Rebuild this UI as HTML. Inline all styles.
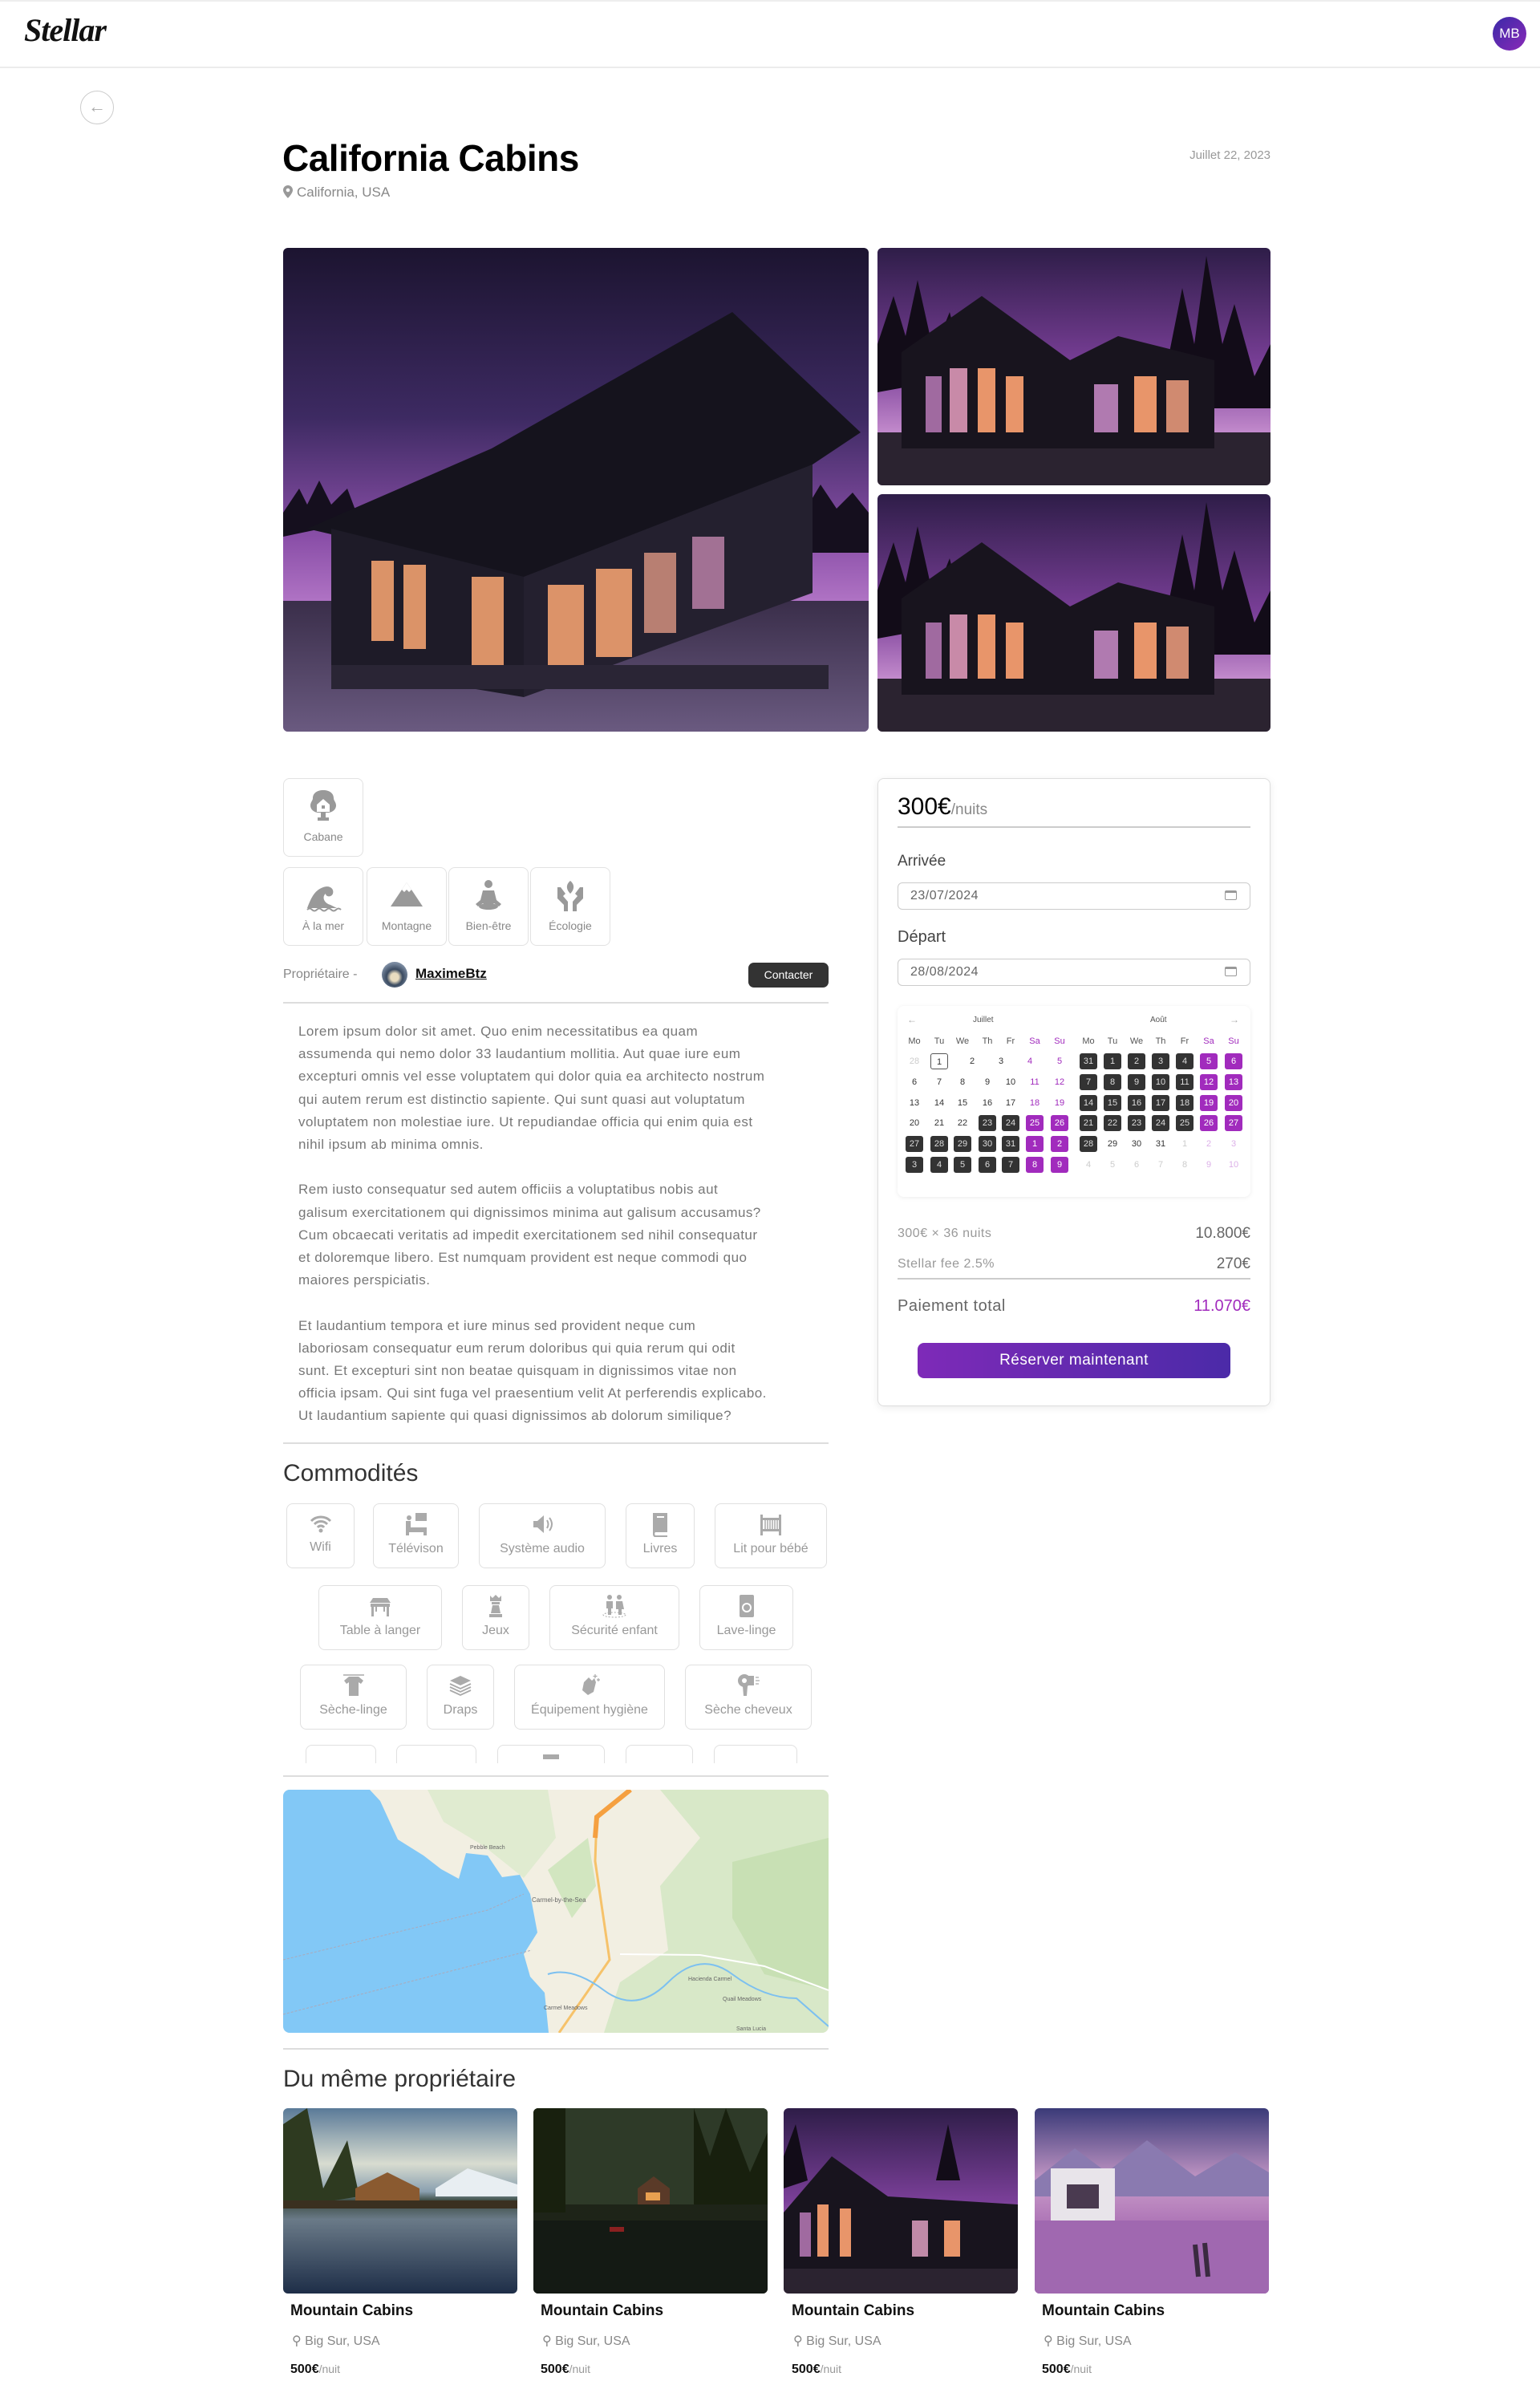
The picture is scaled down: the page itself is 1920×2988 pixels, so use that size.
<!DOCTYPE html>
<html><head><meta charset="utf-8">
<style>
*{box-sizing:border-box;margin:0;padding:0}
body{width:1920px;height:2988px;position:relative;background:#fff;font-family:"Liberation Sans",sans-serif;color:#222;overflow:hidden}
.a{position:absolute}
.hdr{left:0;top:0;width:1920px;height:85px;border-bottom:2px solid #ececec;border-top:2px solid #eee}
.logo{left:30px;top:14px;font-family:"Liberation Serif",serif;font-style:italic;font-weight:bold;font-size:40px;color:#111;letter-spacing:-1px}
.av{left:1861px;top:21px;width:42px;height:42px;border-radius:50%;background:linear-gradient(135deg,#3a2aa8,#8a2ab8);color:#fff;font-size:17px;line-height:42px;text-align:center}
.back{left:100px;top:113px;width:42px;height:42px;border-radius:50%;border:1.5px solid #ccc;color:#aaa;text-align:center;line-height:38px;font-size:22px}
.title{left:352px;top:170px;font-size:46px;font-weight:bold;color:#000;letter-spacing:-0.5px}
.loc{left:353px;top:230px;font-size:17px;color:#888}
.date{left:1380px;width:204px;text-align:right;top:185px;font-size:15px;color:#999}
.img{overflow:hidden;border-radius:6px}
.tile{width:100px;height:98px;border:1.5px solid #e2e2e2;border-radius:8px;text-align:center;font-size:14px;color:#888}
.tile svg{display:block;margin:12px auto 8px}
.btn{left:933px;top:1200px;width:100px;height:31px;background:#333;color:#fff;border-radius:7px;font-size:14px;text-align:center;line-height:31px}
.hr{height:2px;background:#ddd}
.desc{left:372px;top:1272px;width:680px;font-size:17px;line-height:28.2px;color:#777;white-space:nowrap;letter-spacing:0.45px}
.desc p{margin-bottom:28.2px}
h2{font-weight:normal;font-size:30px;color:#333}
.am{height:81px;border:1.5px solid #e0e0e0;border-radius:8px;text-align:center;font-size:16px;color:#999;overflow:hidden}
.am svg{display:block;margin:9px auto 6px}
.card{left:1094px;top:970px;width:490px;height:783px;border:1.5px solid #ddd;border-radius:8px;box-shadow:0 2px 10px rgba(0,0,0,.08)}
.inp{left:1119px;width:440px;height:34px;border:1.5px solid #ccc;border-radius:6px;font-size:16px;color:#666;padding-left:15px;line-height:31px;letter-spacing:0.5px}
.inp span{position:absolute;right:16px;top:9px;width:15px;height:12px;border:1.5px solid #999;border-top-width:3px;border-radius:2px}
.cal{left:1119px;top:1254px;width:440px;height:238px;border-radius:8px;box-shadow:0 1px 6px rgba(0,0,0,.08)}
.r{position:absolute;left:0;height:0;width:1920px}
.r i{position:absolute;font-style:normal;width:22px;height:20px;margin-left:-11px;margin-top:-10px;line-height:20px;text-align:center;font-size:11px;color:#333;border-radius:3px}
i.d{background:#333;color:#ddd}
i.p{background:#a12bbd;color:#fff}
i.t{color:#a12bbd}
i.f{color:#ccc}
i.q{color:#dcb0e8}
i.o{border:1px solid #555}
i.h{color:#555}
.mc{width:292px;height:231px;border-radius:6px;overflow:hidden;top:2628px}
.mt{font-size:19px;font-weight:bold;color:#111;top:2870px}
.ml{font-size:16px;color:#888;top:2908px}
.mp{font-size:16px;color:#111;font-weight:bold;top:2945px}
.mp span{font-weight:normal;color:#999;font-size:14px}
</style></head><body>

<div class="a hdr"></div>
<div class="a logo">Stellar</div>
<div class="a av">MB</div>
<div class="a back">&larr;</div>

<div class="a title">California Cabins</div>
<div class="a loc"><svg width="12" height="16" viewBox="0 0 12 16" style="vertical-align:-2px;margin-right:5px"><path d="M6 0C2.7 0 0 2.6 0 6c0 4 6 10 6 10s6-6 6-10C12 2.6 9.3 0 6 0zm0 8.3A2.3 2.3 0 1 1 6 3.7a2.3 2.3 0 0 1 0 4.6z" fill="#999"/></svg>California, USA</div>
<div class="a date">Juillet 22, 2023</div>

<div class="a img" style="left:353px;top:309px;width:730px;height:603px">
<svg width="730" height="603" viewBox="0 0 730 603">
<defs><linearGradient id="sk" x1="0" y1="0" x2="0" y2="1"><stop offset="0" stop-color="#1c1430"/><stop offset=".35" stop-color="#3d2a62"/><stop offset=".6" stop-color="#8a4fa8"/><stop offset=".75" stop-color="#b578c8"/></linearGradient>
<linearGradient id="gr" x1="0" y1="0" x2="0" y2="1"><stop offset="0" stop-color="#3a2e4a"/><stop offset="1" stop-color="#6a5a80"/></linearGradient></defs>
<rect width="730" height="603" fill="url(#sk)"/>
<path d="M0 330 L20 300 L30 320 L45 290 L60 320 L80 300 L95 340 L0 360Z M620 330 L640 300 L655 320 L670 295 L690 325 L710 305 L730 330 L730 380 L620 380Z" fill="#150f1e"/>
<rect y="440" width="730" height="163" fill="url(#gr)"/>
<path d="M30 350 L260 250 L560 80 L720 230 L660 270 L330 420 Z" fill="#15131d"/>
<path d="M60 350 L300 410 L300 560 L60 520Z" fill="#1e1b28"/>
<path d="M300 410 L660 270 L660 430 L300 560Z" fill="#24202f"/>
<g fill="#f0a070" opacity=".9"><rect x="110" y="390" width="28" height="100"/><rect x="150" y="395" width="28" height="105"/><rect x="235" y="410" width="40" height="110"/><rect x="330" y="420" width="45" height="110"/><rect x="390" y="400" width="45" height="110"/><rect x="450" y="380" width="40" height="100" fill="#c98a7a"/><rect x="510" y="360" width="40" height="90" fill="#b07aa0"/></g>
<rect x="60" y="520" width="620" height="30" fill="#2a2535"/>
</svg></div>

<div class="a img" style="left:1094px;top:309px;width:490px;height:296px">
<svg width="490" height="296" viewBox="0 0 490 296">
<defs><linearGradient id="s2" x1="0" y1="0" x2="0" y2="1"><stop offset="0" stop-color="#2e1d48"/><stop offset=".5" stop-color="#7a3f98"/><stop offset=".8" stop-color="#c890d0"/></linearGradient></defs>
<rect width="490" height="296" fill="url(#s2)"/>
<path d="M0 120 L20 60 L35 110 L50 40 L70 130 L90 80 L110 160 L0 180Z M360 150 L380 50 L395 120 L410 10 L430 120 L445 70 L470 160 L490 120 L490 200 L360 200Z" fill="#120c18"/>
<rect y="230" width="490" height="66" fill="#2b2330"/>
<path d="M30 130 L130 60 L240 140 L300 110 L420 140 L420 250 L30 250Z" fill="#18141e"/>
<g fill="#e8956a"><rect x="60" y="160" width="20" height="70" fill="#a06aa0"/><rect x="90" y="150" width="22" height="80" fill="#c88aa8"/><rect x="125" y="150" width="22" height="80"/><rect x="160" y="160" width="22" height="70"/><rect x="270" y="170" width="30" height="60" fill="#b07ab0"/><rect x="320" y="160" width="28" height="70"/><rect x="360" y="165" width="28" height="65" fill="#d08a70"/></g>
</svg></div>
<div class="a img" style="left:1094px;top:616px;width:490px;height:296px">
<svg width="490" height="296" viewBox="0 0 490 296">
<rect width="490" height="296" fill="url(#s2)"/>
<path d="M0 120 L20 60 L35 110 L50 40 L70 130 L90 80 L110 160 L0 180Z M360 150 L380 50 L395 120 L410 10 L430 120 L445 70 L470 160 L490 120 L490 200 L360 200Z" fill="#120c18"/>
<rect y="230" width="490" height="66" fill="#2b2330"/>
<path d="M30 130 L130 60 L240 140 L300 110 L420 140 L420 250 L30 250Z" fill="#18141e"/>
<g fill="#e8956a"><rect x="60" y="160" width="20" height="70" fill="#a06aa0"/><rect x="90" y="150" width="22" height="80" fill="#c88aa8"/><rect x="125" y="150" width="22" height="80"/><rect x="160" y="160" width="22" height="70"/><rect x="270" y="170" width="30" height="60" fill="#b07ab0"/><rect x="320" y="160" width="28" height="70"/><rect x="360" y="165" width="28" height="65" fill="#d08a70"/></g>
</svg></div>

<div class="a tile" style="left:353px;top:970px"><svg width="44" height="44" viewBox="0 0 44 44"><path d="M22 2c-8 0-13 4-13 10 0 3-3 5-3 9 0 6 6 9 10 9h3v6h-4v4h14v-4h-4v-6h3c4 0 10-3 10-9 0-4-3-6-3-9 0-6-5-10-13-10z" fill="#999"/><path d="M14 20l8-7 8 7v9H14z" fill="#fff"/><rect x="20" y="21" width="4" height="4" fill="#999"/></svg>Cabane</div>
<div class="a tile" style="left:353px;top:1081px"><svg width="48" height="44" viewBox="0 0 48 44"><path d="M4 38c4-10 8-22 20-26 8-3 14 2 12 8-2 5-9 4-9 0-5 4-2 12 6 14l8 4z" fill="#999"/><path d="M4 40q3-3 6 0t6 0 6 0 6 0 6 0 6 0 6 0" stroke="#999" stroke-width="2" fill="none"/></svg>À la mer</div>
<div class="a tile" style="left:457px;top:1081px"><svg width="48" height="44" viewBox="0 0 48 44"><path d="M4 36L24 6l20 30z" fill="#999"/><path d="M18 15l6-9 6 9-3 3-3-3-3 3z" fill="#fff"/></svg>Montagne</div>
<div class="a tile" style="left:559px;top:1081px"><svg width="44" height="44" viewBox="0 0 44 44"><circle cx="22" cy="8" r="5" fill="#999"/><path d="M15 16h14l3 12 6 5-3 3-6-4-7 3-7-3-6 4-3-3 6-5z" fill="#999"/><ellipse cx="22" cy="36" rx="12" ry="4" fill="#999"/></svg>Bien-être</div>
<div class="a tile" style="left:661px;top:1081px"><svg width="44" height="44" viewBox="0 0 44 44"><path d="M6 12v14l8 8v8h5V30l-6-7 3-3-6-8z M38 12v14l-8 8v8h-5V30l6-7-3-3 6-8z" fill="#999"/><path d="M22 4c5 4 6 10 0 16-6-6-5-12 0-16z" fill="#999"/></svg>Écologie</div>

<div class="a" style="left:353px;top:1206px;font-size:16px;color:#888">Propriétaire -</div>
<div class="a" style="left:476px;top:1199px;width:32px;height:32px;border-radius:50%;background:radial-gradient(circle at 50% 60%,#e8dcc0 0 20%,#3a4a60 40%,#7a8aa0 70%)"></div>
<div class="a" style="left:518px;top:1204px;font-size:17px;color:#111;text-decoration:underline;font-weight:bold">MaximeBtz</div>
<div class="a btn">Contacter</div>
<div class="a hr" style="left:353px;top:1249px;width:680px"></div>

<div class="a desc">
<p>Lorem ipsum dolor sit amet. Quo enim necessitatibus ea quam<br>assumenda qui nemo dolor 33 laudantium mollitia. Aut quae iure eum<br>excepturi omnis vel esse voluptatem qui dolor quia ea architecto nostrum<br>qui autem rerum est distinctio sapiente. Qui sunt quasi aut voluptatum<br>voluptatem non molestiae iure. Ut repudiandae officia qui enim quia est<br>nihil ipsum ab minima omnis.</p>
<p>Rem iusto consequatur sed autem officiis a voluptatibus nobis aut<br>galisum exercitationem qui dignissimos minima aut galisum accusamus?<br>Cum obcaecati veritatis ad impedit exercitationem sed nihil consequatur<br>et doloremque libero. Est numquam provident est neque commodi quo<br>maiores perspiciatis.</p>
<p>Et laudantium tempora et iure minus sed provident neque cum<br>laboriosam consequatur eum rerum doloribus qui quia rerum qui odit<br>sunt. Et excepturi sint non beatae quisquam in dignissimos vitae non<br>officia ipsam. Qui sint fuga vel praesentium velit At perferendis explicabo.<br>Ut laudantium sapiente qui quasi dignissimos ab dolorum similique?</p>
</div>
<div class="a hr" style="left:353px;top:1798px;width:680px"></div>

<h2 class="a" style="left:353px;top:1820px">Commodités</h2>

<div class="a" style="left:340px;top:1872px;width:700px;height:326px;overflow:hidden">
<div class="a am" style="left:17px;top:2px;width:85px"><svg width="30" height="30" viewBox="0 0 30 30"><path d="M3 12a17 17 0 0 1 24 0M7 16a11 11 0 0 1 16 0M11 20a5 5 0 0 1 8 0" stroke="#aaa" stroke-width="3" fill="none"/><circle cx="15" cy="24" r="2.5" fill="#aaa"/></svg>Wifi</div>
<div class="a am" style="left:125px;top:2px;width:107px"><svg width="34" height="32" viewBox="0 0 34 32"><rect x="16" y="2" width="14" height="10" fill="#aaa"/><circle cx="8" cy="8" r="3" fill="#aaa"/><path d="M4 12h6v8h20v10h-4v-4H8v4H4z" fill="#aaa"/></svg>Télévison</div>
<div class="a am" style="left:257px;top:2px;width:158px"><svg width="34" height="32" viewBox="0 0 34 32"><path d="M6 12h5l8-7v22l-8-7H6z" fill="#aaa"/><path d="M23 11q3 5 0 10M26 8q6 8 0 16" stroke="#aaa" stroke-width="2" fill="none"/></svg>Système audio</div>
<div class="a am" style="left:440px;top:2px;width:86px"><svg width="30" height="32" viewBox="0 0 30 32"><path d="M6 2h18v24H9a3 3 0 0 0 0 4h15v2H8a4 4 0 0 1-2-3z" fill="#aaa"/><rect x="11" y="6" width="9" height="2" fill="#fff"/></svg>Livres</div>
<div class="a am" style="left:551px;top:2px;width:140px"><svg width="34" height="32" viewBox="0 0 34 32"><path d="M4 4h3v26H4zM27 4h3v26h-3zM7 8h20v3H7zM7 22h20v3H7z" fill="#aaa"/><path d="M10 11v11M13 11v11M16 11v11M19 11v11M22 11v11M25 11v11" stroke="#aaa" stroke-width="1.5"/></svg>Lit pour bébé</div>
<div class="a am" style="left:57px;top:104px;width:154px"><svg width="34" height="32" viewBox="0 0 34 32"><path d="M4 12l4-6h18l4 6z" fill="#aaa"/><path d="M5 13h24v4H5zM6 17h3v12H6zM25 17h3v12h-3zM11 17h2v6h-2zM21 17h2v6h-2z" fill="#aaa"/></svg>Table à langer</div>
<div class="a am" style="left:236px;top:104px;width:84px"><svg width="30" height="32" viewBox="0 0 30 32"><path d="M8 3l3 3 4-4 4 4 3-3v7H8zM10 11h10v3H10zM11 15h8l2 10H9zM7 26h16v4H7z" fill="#aaa"/></svg>Jeux</div>
<div class="a am" style="left:345px;top:104px;width:162px"><svg width="34" height="32" viewBox="0 0 34 32"><circle cx="11" cy="5" r="3" fill="#aaa"/><circle cx="23" cy="5" r="3" fill="#aaa"/><path d="M7 10h8v9h-2v8h-4v-8H7zM19 10h8l2 10h-3v7h-4v-7h-3z" fill="#aaa"/><ellipse cx="17" cy="27" rx="14" ry="3" stroke="#aaa" stroke-dasharray="2 2" fill="none"/></svg>Sécurité enfant</div>
<div class="a am" style="left:532px;top:104px;width:117px"><svg width="30" height="32" viewBox="0 0 30 32"><rect x="6" y="2" width="18" height="28" rx="2" fill="#aaa"/><circle cx="15" cy="18" r="6" fill="#fff"/><circle cx="15" cy="18" r="4" fill="#aaa"/></svg>Lave-linge</div>
<div class="a am" style="left:34px;top:203px;width:133px"><svg width="34" height="32" viewBox="0 0 34 32"><path d="M4 3h26" stroke="#aaa" stroke-width="1.5"/><path d="M11 5h12l6 5-3 4-3-2v17H11V12l-3 2-3-4z" fill="#aaa"/></svg>Sèche-linge</div>
<div class="a am" style="left:192px;top:203px;width:84px"><svg width="34" height="32" viewBox="0 0 34 32"><path d="M17 4l13 6-13 6-13-6z" fill="#aaa"/><path d="M4 14l13 6 13-6M4 18l13 6 13-6M4 22l13 6 13-6" stroke="#aaa" stroke-width="1.8" fill="none"/></svg>Draps</div>
<div class="a am" style="left:301px;top:203px;width:188px"><svg width="34" height="32" viewBox="0 0 34 32"><path d="M10 12l6-6 4 4 3-3 2 5-3 12-7 4-7-6z" fill="#aaa"/><path d="M24 2v5M21.5 4.5h5M28 7v4M26 9h4" stroke="#aaa" stroke-width="1.2"/></svg>Équipement hygiène</div>
<div class="a am" style="left:514px;top:203px;width:158px"><svg width="34" height="32" viewBox="0 0 34 32"><circle cx="12" cy="10" r="8" fill="#aaa"/><circle cx="12" cy="10" r="3" fill="#fff"/><path d="M16 4h8v12h-8zM10 17h6l-1 12h-4z" fill="#aaa"/><path d="M26 6h4M26 10h5M26 14h4" stroke="#aaa" stroke-width="1.3"/></svg>Sèche cheveux</div>
<div class="a am" style="left:41px;top:303px;width:88px"></div>
<div class="a am" style="left:154px;top:303px;width:100px"></div>
<div class="a am" style="left:280px;top:303px;width:134px"><div style="width:20px;height:6px;background:#aaa;margin:11px auto 0"></div></div>
<div class="a am" style="left:440px;top:303px;width:84px"></div>
<div class="a am" style="left:550px;top:303px;width:104px"></div>
</div>
<div class="a hr" style="left:353px;top:2213px;width:680px"></div>

<div class="a img" style="left:353px;top:2231px;width:680px;height:303px;border-radius:8px">
<svg width="680" height="303" viewBox="0 0 680 303">
<rect width="680" height="303" fill="#f2efe2"/>
<path d="M470 0 L680 0 L680 303 L400 303 L420 240 L480 200 L470 120 L520 60Z" fill="#d8e8c8"/>
<path d="M560 90 L680 60 L680 250 L600 230 L560 160Z" fill="#c8e0b4"/>
<path d="M180 0 L330 0 L340 60 L300 110 L250 70 L200 40Z" fill="#e0ebd0"/>
<path d="M330 100 L380 60 L390 120 L360 160Z" fill="#d2e6c0"/>
<path d="M0 0 L108 0 L121 14 L143 62 L175 82 L197 99 L219 111 L228 79 L255 82 L273 109 L295 106 L308 130 L317 178 L300 205 L308 233 L326 253 L331 303 L0 303Z" fill="#82c8f6"/>
<path d="M0 212 L255 150 L300 130 M0 280 L310 200" stroke="#aab" stroke-width="1" stroke-dasharray="3 2" fill="none"/>
<path d="M433 0 L391 34 L389 89 L407 212 L344 303" stroke="#f6c26a" stroke-width="3" fill="none"/>
<path d="M433 0 L391 34 L389 60" stroke="#f5a040" stroke-width="6" fill="none"/>
<path d="M330 230 Q360 220 400 250 T480 240 T560 230 T640 260 L680 295" stroke="#7cc0f0" stroke-width="2" fill="none"/>
<path d="M420 205 L520 206 L600 220 L680 250" stroke="#fff" stroke-width="2" fill="none"/>
<g font-size="7" fill="#666" font-family="Liberation Sans"><text x="233" y="74">Pebble Beach</text><text x="310" y="140" font-size="8">Carmel-by-the-Sea</text><text x="325" y="274">Carmel Meadows</text><text x="505" y="238">Hacienda Carmel</text><text x="548" y="263">Quail Meadows</text><text x="565" y="300">Santa Lucia</text></g>
</svg></div>
<div class="a hr" style="left:353px;top:2553px;width:680px"></div>

<h2 class="a" style="left:353px;top:2575px">Du même propriétaire</h2>

<div class="a mc" style="left:353px"><svg width="292" height="231" viewBox="0 0 292 231"><defs><linearGradient id="c1" x1="0" y1="0" x2="0" y2="1"><stop offset="0" stop-color="#5a7a98"/><stop offset=".3" stop-color="#d8dcd0"/><stop offset=".45" stop-color="#8aa0b0"/><stop offset=".5" stop-color="#3a4a40"/><stop offset=".6" stop-color="#6a7a88"/><stop offset="1" stop-color="#1e2e48"/></linearGradient></defs><rect width="292" height="231" fill="url(#c1)"/><path d="M190 100 L230 75 L292 95 L292 110 L190 110Z" fill="#e8eef2"/><path d="M0 20 L30 0 L50 100 L80 40 L95 110 L0 125Z" fill="#2e3a20"/><path d="M90 100 L130 80 L170 100 L170 118 L90 118Z" fill="#8a5a30"/><rect x="0" y="115" width="292" height="10" fill="#3a3020"/></svg></div>
<div class="a mc" style="left:665px"><svg width="292" height="231" viewBox="0 0 292 231"><rect width="292" height="231" fill="#1e2418"/><rect width="292" height="120" fill="#2e3a28"/><path d="M0 0h40v130H0zM200 0l20 60 20-60 30 80 22-50v90H200z" fill="#18200e"/><path d="M130 100 L150 85 L170 100 L170 120 L130 120Z" fill="#5a3a28"/><rect x="140" y="105" width="18" height="10" fill="#e8a050"/><rect x="0" y="140" width="292" height="91" fill="#141a14"/><rect x="95" y="148" width="18" height="6" fill="#8a2020"/></svg></div>
<div class="a mc" style="left:977px"><svg width="292" height="231" viewBox="0 0 292 231"><rect width="292" height="231" fill="url(#s2)"/><path d="M190 90 L205 20 L220 90Z M0 60 L15 20 L30 90 L0 100Z" fill="#120c18"/><rect y="190" width="292" height="41" fill="#2b2330"/><path d="M0 130 L60 60 L130 110 L292 120 L292 200 L0 200Z" fill="#18141e"/><g fill="#e8956a"><rect x="20" y="130" width="14" height="55" fill="#a06aa0"/><rect x="42" y="120" width="14" height="65"/><rect x="70" y="125" width="14" height="60"/><rect x="160" y="140" width="20" height="45" fill="#c08aa8"/><rect x="200" y="140" width="20" height="45"/></g></svg></div>
<div class="a mc" style="left:1290px"><svg width="292" height="231" viewBox="0 0 292 231"><defs><linearGradient id="c4" x1="0" y1="0" x2="0" y2="1"><stop offset="0" stop-color="#3a3a78"/><stop offset=".4" stop-color="#c89ac8"/><stop offset=".6" stop-color="#b078b8"/><stop offset="1" stop-color="#7a4a98"/></linearGradient></defs><rect width="292" height="231" fill="url(#c4)"/><path d="M0 90 L50 50 L90 80 L140 40 L200 85 L250 55 L292 80 L292 110 L0 110Z" fill="#8a7ab0"/><rect x="20" y="75" width="80" height="70" fill="#e8e4ea"/><rect x="40" y="95" width="40" height="30" fill="#4a3a50"/><rect y="140" width="292" height="91" fill="#a068b0"/><path d="M200 170 l4 40 M212 168 l4 42" stroke="#3a2a40" stroke-width="6"/></svg></div>

<div class="a mt" style="left:362px">Mountain Cabins</div><div class="a mt" style="left:674px">Mountain Cabins</div><div class="a mt" style="left:987px">Mountain Cabins</div><div class="a mt" style="left:1299px">Mountain Cabins</div>
<div class="a ml" style="left:364px">&#9906; Big Sur, USA</div><div class="a ml" style="left:676px">&#9906; Big Sur, USA</div><div class="a ml" style="left:989px">&#9906; Big Sur, USA</div><div class="a ml" style="left:1301px">&#9906; Big Sur, USA</div>
<div class="a mp" style="left:362px">500€<span>/nuit</span></div><div class="a mp" style="left:674px">500€<span>/nuit</span></div><div class="a mp" style="left:987px">500€<span>/nuit</span></div><div class="a mp" style="left:1299px">500€<span>/nuit</span></div>

<div class="a card"></div>
<div class="a" style="left:1119px;top:989px;font-size:30px;color:#000">300€<span style="font-size:19px;color:#888">/nuits</span></div>
<div class="a hr" style="left:1119px;top:1030px;width:440px;height:1.5px;background:#ccc"></div>
<div class="a" style="left:1119px;top:1063px;font-size:19px;color:#444">Arrivée</div>
<div class="a inp" style="top:1100px">23/07/2024<span></span></div>
<div class="a" style="left:1119px;top:1157px;font-size:20px;color:#444">Départ</div>
<div class="a inp" style="top:1195px">28/08/2024<span></span></div>
<div class="a cal"></div>
<div class="a" style="left:1131px;top:1264px;font-size:12px;color:#aaa">&larr;</div>
<div class="a" style="left:1213px;top:1266px;font-size:10px;color:#555">Juillet</div>
<div class="a" style="left:1434px;top:1266px;font-size:10px;color:#555">Août</div>
<div class="a" style="left:1533px;top:1264px;font-size:12px;color:#aaa">&rarr;</div>

<div class="r" style="top:1298px"><i class="h" style="left:1140px">Mo</i><i class="h" style="left:1171px">Tu</i><i class="h" style="left:1200px">We</i><i class="h" style="left:1231px">Th</i><i class="h" style="left:1260px">Fr</i><i class="t" style="left:1290px">Sa</i><i class="t" style="left:1321px">Su</i><i class="h" style="left:1357px">Mo</i><i class="h" style="left:1387px">Tu</i><i class="h" style="left:1417px">We</i><i class="h" style="left:1447px">Th</i><i class="h" style="left:1477px">Fr</i><i class="t" style="left:1507px">Sa</i><i class="t" style="left:1538px">Su</i></div>
<div class="r" style="top:1323px"><i class="f" style="left:1140px">28</i><i class="o" style="left:1171px">1</i><i style="left:1212px">2</i><i style="left:1248px">3</i><i class="t" style="left:1284px">4</i><i class="t" style="left:1321px">5</i><i class="d" style="left:1357px">31</i><i class="d" style="left:1387px">1</i><i class="d" style="left:1417px">2</i><i class="d" style="left:1447px">3</i><i class="d" style="left:1477px">4</i><i class="p" style="left:1507px">5</i><i class="p" style="left:1538px">6</i></div>
<div class="r" style="top:1349px"><i style="left:1140px">6</i><i style="left:1171px">7</i><i style="left:1200px">8</i><i style="left:1231px">9</i><i style="left:1260px">10</i><i class="t" style="left:1290px">11</i><i class="t" style="left:1321px">12</i><i class="d" style="left:1357px">7</i><i class="d" style="left:1387px">8</i><i class="d" style="left:1417px">9</i><i class="d" style="left:1447px">10</i><i class="d" style="left:1477px">11</i><i class="p" style="left:1507px">12</i><i class="p" style="left:1538px">13</i></div>
<div class="r" style="top:1375px"><i style="left:1140px">13</i><i style="left:1171px">14</i><i style="left:1200px">15</i><i style="left:1231px">16</i><i style="left:1260px">17</i><i class="t" style="left:1290px">18</i><i class="t" style="left:1321px">19</i><i class="d" style="left:1357px">14</i><i class="d" style="left:1387px">15</i><i class="d" style="left:1417px">16</i><i class="d" style="left:1447px">17</i><i class="d" style="left:1477px">18</i><i class="p" style="left:1507px">19</i><i class="p" style="left:1538px">20</i></div>
<div class="r" style="top:1400px"><i style="left:1140px">20</i><i style="left:1171px">21</i><i style="left:1200px">22</i><i class="d" style="left:1231px">23</i><i class="d" style="left:1260px">24</i><i class="p" style="left:1290px">25</i><i class="p" style="left:1321px">26</i><i class="d" style="left:1357px">21</i><i class="d" style="left:1387px">22</i><i class="d" style="left:1417px">23</i><i class="d" style="left:1447px">24</i><i class="d" style="left:1477px">25</i><i class="p" style="left:1507px">26</i><i class="p" style="left:1538px">27</i></div>
<div class="r" style="top:1426px"><i class="d" style="left:1140px">27</i><i class="d" style="left:1171px">28</i><i class="d" style="left:1200px">29</i><i class="d" style="left:1231px">30</i><i class="d" style="left:1260px">31</i><i class="p" style="left:1290px">1</i><i class="p" style="left:1321px">2</i><i class="d" style="left:1357px">28</i><i style="left:1387px">29</i><i style="left:1417px">30</i><i style="left:1447px">31</i><i class="f" style="left:1477px">1</i><i class="q" style="left:1507px">2</i><i class="q" style="left:1538px">3</i></div>
<div class="r" style="top:1452px"><i class="d" style="left:1140px">3</i><i class="d" style="left:1171px">4</i><i class="d" style="left:1200px">5</i><i class="d" style="left:1231px">6</i><i class="d" style="left:1260px">7</i><i class="p" style="left:1290px">8</i><i class="p" style="left:1321px">9</i><i class="f" style="left:1357px">4</i><i class="f" style="left:1387px">5</i><i class="f" style="left:1417px">6</i><i class="f" style="left:1447px">7</i><i class="f" style="left:1477px">8</i><i class="q" style="left:1507px">9</i><i class="q" style="left:1538px">10</i></div>

<div class="a" style="left:1119px;top:1529px;font-size:16px;color:#999;letter-spacing:0.5px">300€ × 36 nuits</div>
<div class="a" style="left:1400px;width:159px;text-align:right;top:1527px;font-size:19px;color:#666">10.800€</div>
<div class="a" style="left:1119px;top:1567px;font-size:16px;color:#999;letter-spacing:0.5px">Stellar fee 2.5%</div>
<div class="a" style="left:1400px;width:159px;text-align:right;top:1565px;font-size:19px;color:#666">270€</div>
<div class="a hr" style="left:1119px;top:1593px;width:440px;height:1.5px;background:#ccc"></div>
<div class="a" style="left:1119px;top:1617px;font-size:20px;color:#666;letter-spacing:0.5px">Paiement total</div>
<div class="a" style="left:1400px;width:159px;text-align:right;top:1617px;font-size:20px;color:#a12bbd">11.070€</div>
<div class="a" style="left:1144px;top:1674px;width:390px;height:44px;border-radius:8px;background:linear-gradient(90deg,#7e2ab8,#4b2aa8);color:#fff;font-size:19px;text-align:center;line-height:44px;letter-spacing:0.5px">Réserver maintenant</div>

</body></html>
